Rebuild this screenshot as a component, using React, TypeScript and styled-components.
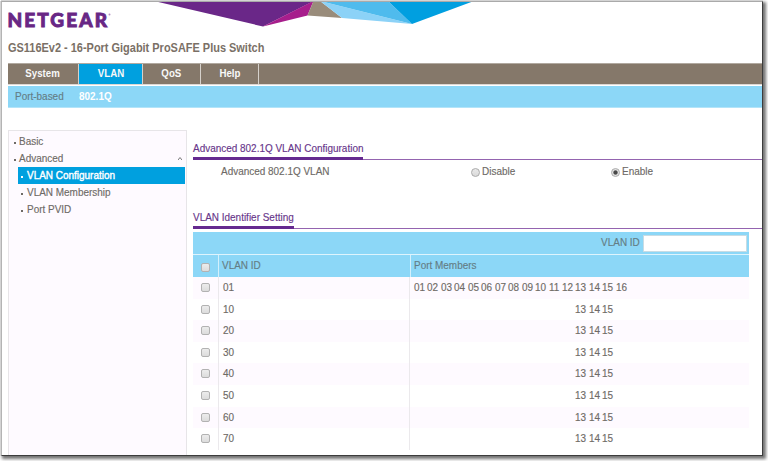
import React from "react";
import styled, { createGlobalStyle } from "styled-components";

const GlobalStyle = createGlobalStyle`
  * { box-sizing: border-box; }
  body {
    margin: 0;
    width: 768px;
    height: 461px;
    overflow: hidden;
    background: #fff;
    color: #6e6a66;
    font: 11px/17px "Liberation Sans", Arial, sans-serif;
  }
`;

const Page = styled.div`
  width: 768px;
  height: 461px;
  padding: 1px 0 0 1px;
  overflow: hidden;
`;

const Frame = styled.div`
  width: 762px;
  height: 455px;
  border: 1px solid #3c3c3c;
  border-top-color: #aaa;
  border-left-color: #b4b4b4;
  box-shadow: 0 -1px 0 #d4d4d4, -1px 0 0 #d4d4d4, 2px 2px 3px 1px rgba(0, 0, 0, 0.55);
  background: #fff;
  overflow: hidden;
`;

const Banner = styled.header`
  height: 61px;
  padding-left: 6px;
  display: grid;
  grid-template-columns: 146px 1fr;
  grid-template-rows: 35px 26px;
`;

const Logo = styled.svg`
  display: block;
  width: 106px;
  height: 35px;
  overflow: visible;
`;

const Facets = styled.svg`
  display: block;
  width: 320px;
  height: 26px;
`;

const Product = styled.div`
  grid-column: 1 / -1;
  display: flex;
  color: #7a7066;
  font-size: 12px;
  font-weight: bold;
  line-height: 22px;
`;

const Narrow = styled.span<{ $scale?: number; $origin?: string }>`
  display: inline-block;
  white-space: pre;
  transform: scaleX(${(p) => p.$scale ?? 0.905});
  transform-origin: ${(p) => p.$origin ?? "left"} center;
`;

const Nav = styled.nav`
  height: 22px;
  margin-left: 6px;
  border-top: 1px solid #b1a9a0;
  border-bottom: 1px solid #ddd8d4;
  background: #85786a;
  display: flex;
`;

const Tab = styled.a<{ $width: number; $active?: boolean }>`
  width: ${(p) => p.$width}px;
  border-right: 1px solid #d6d1cb;
  background: ${(p) => (p.$active ? "#00a0df" : "transparent")};
  color: #f8f8f8;
  font-weight: bold;
  line-height: 19px;
  text-align: center;
`;

const SubNav = styled.nav`
  height: 22px;
  margin: 1px 0 0 6px;
  padding-left: 7px;
  border-bottom: 1px solid #b3e4f9;
  background: #8cd7f7;
  display: flex;
  line-height: 20px;
`;

const SubLink = styled.a<{ $active?: boolean }>`
  min-width: 64px;
  color: ${(p) => (p.$active ? "#fff" : "#647d85")};
  font-weight: ${(p) => (p.$active ? "bold" : "normal")};
  -webkit-text-stroke: ${(p) => (p.$active ? "0" : "0.15px currentColor")};
`;

const Body = styled.div`
  display: flex;
  padding: 22px 0 0 6px;
  -webkit-text-stroke: 0.15px currentColor;
`;

const Sidebar = styled.aside`
  width: 179px;
  height: 327px;
  flex: none;
  padding: 2px 1px 0 5px;
  border: 1px solid #e7e5e8;
  background: #fefaff;
`;

const Item = styled.div<{ $child?: boolean; $active?: boolean }>`
  height: 17px;
  margin-left: ${(p) => (p.$child ? 4 : 0)}px;
  padding-left: ${(p) => (p.$child ? 3 : 0)}px;
  display: flex;
  align-items: center;
  background: ${(p) => (p.$active ? "#00a0df" : "transparent")};
  color: ${(p) => (p.$active ? "#fff" : "inherit")};
  -webkit-text-stroke: ${(p) => (p.$active ? "0.4px #fff" : "0.15px currentColor")};
  &::before {
    content: "";
    width: 2px;
    height: 2px;
    margin: 2px ${(p) => (p.$child ? 4 : 3)}px 0 0;
    background: currentColor;
  }
`;

const Caret = styled.svg`
  width: 4px;
  height: 3px;
  margin: 0 3px 0 auto;
`;

const Main = styled.main`
  flex: 1;
  padding: 10px 0 0 6px;
`;

const SectionTitle = styled.h2`
  height: 20px;
  margin: 0;
  border-bottom: 1px solid #9464b0;
  color: #67358a;
  font-size: 11px;
  font-weight: normal;
  line-height: 17px;
`;

const TitleMark = styled.span<{ $width: number }>`
  display: block;
  width: ${(p) => p.$width}px;
  height: 20px;
  border-bottom: 3px solid #652a90;
`;

const ModeRow = styled.div`
  height: 49px;
  padding: 3px 0 0 28px;
  display: grid;
  grid-template-columns: 249.5px 140px 1fr;
`;

const RadioLabel = styled.label`
  height: 17px;
  display: flex;
  align-items: center;
  gap: 2px;
`;

const Radio = styled.span<{ $checked?: boolean }>`
  width: 9px;
  height: 9px;
  margin-top: 2px;
  border: 1px solid #aaa;
  border-radius: 50%;
  background: ${(p) =>
    p.$checked
      ? "radial-gradient(circle, #484848 0 1.7px, #e2e2e2 2.6px)"
      : "linear-gradient(#e9e9e9, #dadada)"};
`;

const Table = styled.section`
  width: 556px;
  margin-top: 3px;
`;

const SearchRow = styled.div`
  height: 23px;
  padding: 3px 2px 0 0;
  border-bottom: 1px solid #def4fd;
  background: #8cd7f7;
  color: #647d85;
  display: flex;
  justify-content: flex-end;
  gap: 3px;
  line-height: 15px;
`;

const SearchInput = styled.input`
  width: 104px;
  height: 17px;
  padding: 0;
  border: 1px solid #c8dce4;
  background: #fff;
  outline: none;
`;

const HeadRow = styled.div`
  height: 22px;
  display: grid;
  grid-template-columns: 25px 192px 1fr;
  background: #8cd7f7;
  color: #647d85;
  line-height: 20px;
`;

const HeadCell = styled.div`
  padding-left: 3px;
  border-left: 1px solid #d3f0fc;
`;

const Row = styled.div`
  height: 21.6px;
  display: grid;
  grid-template-columns: 25px 191px 1fr;
  line-height: 21px;
  &:nth-child(odd) { background: #fefaff; }
`;

const Cell = styled.div`
  padding-left: 4px;
  border-left: 1px solid #ebe9ec;
`;

const CheckCell = styled.div<{ $head?: boolean }>`
  padding: ${(p) => (p.$head ? "8px 0 0 8px" : "6px 0 0 8px")};
`;

const Check = styled.span`
  display: block;
  width: 9px;
  height: 9px;
  border: 1px solid #b2b2b2;
  border-radius: 2px;
  background: linear-gradient(#ececec, #dcdcdc);
`;

const Ports = styled.div`
  display: grid;
  grid-template-columns: repeat(16, 13.46px);
`;

const Port = styled.span<{ $port: number }>`
  grid-column: ${(p) => p.$port};
  grid-row: 1;
`;

const allPorts = Array.from({ length: 16 }, (_, i) => i + 1);
const vlans = ["01", "10", "20", "30", "40", "50", "60", "70"].map((id) => ({
  id,
  ports: id === "01" ? allPorts : [13, 14, 15],
}));

const tabs = [
  { label: "System", width: 71 },
  { label: "VLAN", width: 64, active: true },
  { label: "QoS", width: 58 },
  { label: "Help", width: 58 },
];

export default function App() {
  return (
    <Page>
      <GlobalStyle />
      <Frame>
        <Banner>
          <Logo viewBox="0 0 106 35">
            <text x="-0.6" y="24.6" textLength="99.6" lengthAdjust="spacing" fontFamily="Lato, sans-serif" fontWeight="900" fontSize="19" fill="#682785" stroke="#682785" strokeWidth="0.9">NETGEAR</text>
            <circle cx="101.5" cy="12.5" r="1" fill="#b695c4" />
          </Logo>
          <Facets viewBox="154 2 320 26">
            <path d="M154 1H314L263 26.5Z" fill="#6a2788" />
            <path d="M313.5 1L263 26.5L307.5 15.5Z" fill="#a71e8c" />
            <path d="M313.5 1L307.5 15.5L342 18L320 1Z" fill="#998c7b" />
            <path d="M320 1L342 18L412 24L320 1Z" fill="#8cd2f7" />
            <path d="M320 1L412 24L388 1Z" fill="#4fbbed" />
            <path d="M388 1L412 24L474 1Z" fill="#009fe0" />
          </Facets>
          <Product><Narrow $scale={0.913}>GS116Ev2 - 16-Port Gigabit ProSAFE Plus Switch</Narrow></Product>
        </Banner>
        <Nav>
          {tabs.map((tab) => (
            <Tab key={tab.label} $width={tab.width} $active={tab.active}>
              <Narrow $scale={0.88} $origin="center">{tab.label}</Narrow>
            </Tab>
          ))}
        </Nav>
        <SubNav>
          <SubLink><Narrow>Port-based</Narrow></SubLink>
          <SubLink $active><Narrow>802.1Q</Narrow></SubLink>
        </SubNav>
        <Body>
          <Sidebar>
            <Item><Narrow>Basic</Narrow></Item>
            <Item>
              <Narrow>Advanced</Narrow>
              <Caret viewBox="0 0 4 3"><path d="M0 3L2 0.5L4 3" fill="none" stroke="#777" /></Caret>
            </Item>
            <Item $child $active><Narrow>VLAN Configuration</Narrow></Item>
            <Item $child><Narrow>VLAN Membership</Narrow></Item>
            <Item $child><Narrow>Port PVID</Narrow></Item>
          </Sidebar>
          <Main>
            <SectionTitle>
              <TitleMark $width={170}><Narrow>Advanced 802.1Q VLAN Configuration</Narrow></TitleMark>
            </SectionTitle>
            <ModeRow>
              <Narrow>Advanced 802.1Q VLAN</Narrow>
              <RadioLabel><Radio /><Narrow>Disable</Narrow></RadioLabel>
              <RadioLabel><Radio $checked /><Narrow>Enable</Narrow></RadioLabel>
            </ModeRow>
            <SectionTitle>
              <TitleMark $width={101}><Narrow>VLAN Identifier Setting</Narrow></TitleMark>
            </SectionTitle>
            <Table>
              <SearchRow>
                <Narrow $origin="right">VLAN ID</Narrow>
                <SearchInput aria-label="VLAN ID" />
              </SearchRow>
              <HeadRow>
                <CheckCell $head><Check /></CheckCell>
                <HeadCell><Narrow>VLAN ID</Narrow></HeadCell>
                <HeadCell><Narrow>Port Members</Narrow></HeadCell>
              </HeadRow>
              <div>
                {vlans.map((vlan) => (
                  <Row key={vlan.id}>
                    <CheckCell><Check /></CheckCell>
                    <Cell><Narrow>{vlan.id}</Narrow></Cell>
                    <Cell>
                      <Ports>
                        {vlan.ports.map((port) => (
                          <Port key={port} $port={port}>
                            <Narrow>{String(port).padStart(2, "0")}</Narrow>
                          </Port>
                        ))}
                      </Ports>
                    </Cell>
                  </Row>
                ))}
              </div>
            </Table>
          </Main>
        </Body>
      </Frame>
    </Page>
  );
}
